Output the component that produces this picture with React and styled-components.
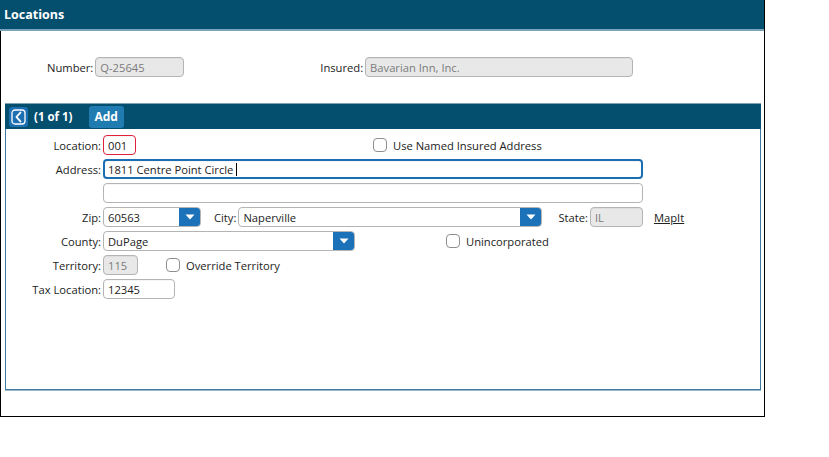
import styled, { createGlobalStyle } from "styled-components";

const GlobalStyle = createGlobalStyle`
  body {
    margin: 0;
    background: #ffffff;
    font-family: "Open Sans", "Liberation Sans", sans-serif;
    font-size: 11.2px;
    color: #222;
  }
`

const Frame = styled.div`
  width: 763px;
  height: 416px;
  border-left: 1px solid #000;
  border-right: 1px solid #000;
  border-bottom: 1px solid #000;
  display: flex;
  flex-direction: column;
`

const TitleBar = styled.div`
  height: 29px;
  background: #044e6e;
  border-bottom: 2px solid #78a3bb;
  color: #fff;
  font-weight: 700;
  font-size: 12.5px;
  display: flex;
  align-items: center;
  padding-left: 4px;
  margin-left: -1px;
`

const TopFields = styled.div`
  display: flex;
  align-items: center;
  padding: 26px 0 0 0;
  height: 20px;
`

const Field = styled.div`
  display: flex;
  align-items: center;
  margin-left: ${props=>props.ml || 0}px;
`

const Label = styled.span`
  white-space: nowrap;
  margin-right: 2px;
`

const Input = styled.div`
  box-sizing: border-box;
  width: ${props=>props.w}px;
  height: 20px;
  border: ${props=>props.focus ? "2px solid #1a6fb4" : props.error ? "1px solid #e0203c" : "1px solid #b4b4b4"};
  border-radius: 4px;
  background: ${props=>props.disabled ? "#e8e8e8" : "#fff"};
  color: ${props=>props.disabled ? "#7a7a7a" : "#222"};
  display: flex;
  align-items: center;
  padding-left: ${props=>props.focus ? 3 : 4}px;
  white-space: nowrap;
  box-shadow: inset 0 1px 0 rgba(0,0,0,0.04);
`

const Caret = styled.span`
  display: inline-block;
  width: 1px;
  height: 13px;
  background: #000;
  margin-left: 3px;
`

const Panel = styled.div`
  margin: 26px 3px 0 4px;
  height: 286px;
  border: 1px solid #3f79a0;
  border-top: none;
  box-shadow: 0 1px 0 #9ab8cb;
  display: flex;
  flex-direction: column;
`

const PanelBar = styled.div`
  height: 26px;
  background: #044e6e;
  margin: 0 -1px;
  display: flex;
  align-items: center;
  padding-left: 4px;
  color: #fff;
  font-weight: 700;
  font-size: 11.5px;
  border-top: 1px solid #7fa3b8;
  box-sizing: border-box;
`

const NavButton = styled.div`
  width: 19px;
  height: 20px;
  border-radius: 3px;
  background: #1d6fb2;
  display: flex;
  align-items: center;
  justify-content: center;
  margin-right: 6px;
`

const AddButton = styled.div`
  margin-left: 16px;
  height: 22px;
  padding: 0 6px;
  border-radius: 3px;
  background: #1f7bb0;
  display: flex;
  align-items: center;
  font-size: 12px;
`

const Body = styled.div`
  padding-top: 6px;
  display: flex;
  flex-direction: column;
  gap: 4px;
`

const Row = styled.div`
  display: flex;
  align-items: center;
  height: 20px;
`

const RowLabel = styled.span`
  width: 95px;
  text-align: right;
  padding-right: 2px;
  white-space: nowrap;
`

const Select = styled.div`
  box-sizing: border-box;
  width: ${props=>props.w}px;
  height: 20px;
  border: 1px solid #b4b4b4;
  border-radius: 4px;
  display: flex;
  align-items: center;
  overflow: hidden;
  background: #fff;
`

const SelectText = styled.span`
  flex: 1;
  padding-left: 4px;
`

const DropButton = styled.span`
  width: 21px;
  height: 100%;
  background: #1b72b8;
  display: flex;
  align-items: center;
  justify-content: center;
`

const Check = styled.label`
  display: flex;
  align-items: center;
  margin-left: ${props=>props.ml || 0}px;
  white-space: nowrap;
`

const Box = styled.span`
  box-sizing: border-box;
  width: 14px;
  height: 14px;
  border: 1px solid #8f8f8f;
  border-radius: 4px;
  background: #fff;
  margin-right: 6px;
`

const Link = styled.a`
  color: #222;
  text-decoration: underline;
  margin-left: ${props=>props.ml || 0}px;
`

const Tri = () => (
  <svg width="10" height="6" viewBox="0 0 10 6">
    <path d="M0.5 0.5 L9.5 0.5 L5 5.5 Z" fill="#fff" />
  </svg>
)

const Dropdown = ({w, value}) => (
  <Select w={w}>
    <SelectText>{value}</SelectText>
    <DropButton><Tri /></DropButton>
  </Select>
)

const App = () => {
  return (
    <>
      <GlobalStyle />
      <Frame>
        <TitleBar>Locations</TitleBar>
        <TopFields>
          <Field ml={46}>
            <Label>Number:</Label>
            <Input w={89} disabled>Q-25645</Input>
          </Field>
          <Field ml={136}>
            <Label>Insured:</Label>
            <Input w={268} disabled>Bavarian Inn, Inc.</Input>
          </Field>
        </TopFields>
        <Panel>
          <PanelBar>
            <NavButton>
              <svg width="15" height="16" viewBox="0 0 15 16">
                <rect x="1" y="1" width="13" height="14" rx="3" fill="none" stroke="#fff" strokeWidth="1.3" />
                <path d="M9.5 3.5 C8 5.5 6 7 5.5 8 C6 9 8 10.5 9.5 12.5" fill="none" stroke="#fff" strokeWidth="1.8" strokeLinecap="round" />
              </svg>
            </NavButton>
            (1 of 1)
            <AddButton>Add</AddButton>
          </PanelBar>
          <Body>
            <Row>
              <RowLabel>Location:</RowLabel>
              <Input w={33} error>001</Input>
              <Check ml={237}><Box />Use Named Insured Address</Check>
            </Row>
            <Row>
              <RowLabel>Address:</RowLabel>
              <Input w={540} focus>1811 Centre Point Circle<Caret /></Input>
            </Row>
            <Row>
              <RowLabel />
              <Input w={540} />
            </Row>
            <Row>
              <RowLabel>Zip:</RowLabel>
              <Dropdown w={98} value="60563" />
              <Field ml={13}>
                <Label>City:</Label>
                <Dropdown w={304} value="Naperville" />
              </Field>
              <Field ml={16}>
                <Label>State:</Label>
                <Input w={53} disabled>IL</Input>
              </Field>
              <Link ml={11}>MapIt</Link>
            </Row>
            <Row>
              <RowLabel>County:</RowLabel>
              <Dropdown w={252} value="DuPage" />
              <Check ml={91}><Box />Unincorporated</Check>
            </Row>
            <Row>
              <RowLabel>Territory:</RowLabel>
              <Input w={35} disabled>115</Input>
              <Check ml={28}><Box />Override Territory</Check>
            </Row>
            <Row>
              <RowLabel>Tax Location:</RowLabel>
              <Input w={72}>12345</Input>
            </Row>
          </Body>
        </Panel>
      </Frame>
    </>
  )
}

export default App;
